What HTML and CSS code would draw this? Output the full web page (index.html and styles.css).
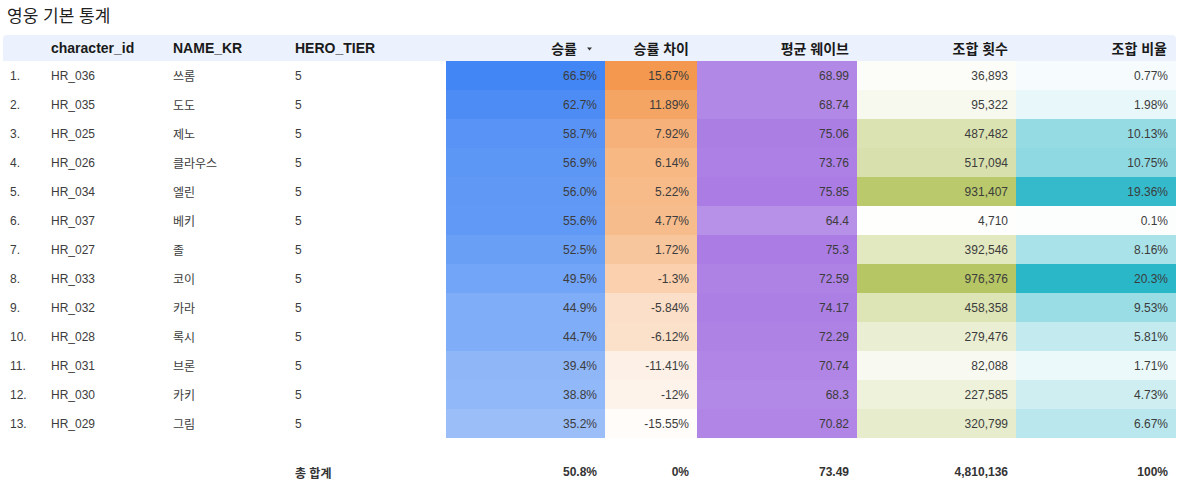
FILE: index.html
```html
<!DOCTYPE html>
<html lang="ko">
<head>
<meta charset="utf-8">
<title>영웅 기본 통계</title>
<link rel="stylesheet" href="styles.css">
</head>
<body>
<div class="title">영웅 기본 통계</div>
<table class="grid">
  <colgroup>
    <col class="c-rank"><col class="c-id"><col class="c-name"><col class="c-tier">
    <col class="c-rate"><col class="c-diff"><col class="c-wave"><col class="c-cnt"><col class="c-ratio">
  </colgroup>
  <thead>
    <tr>
      <th class="first"></th>
      <th>character_id</th>
      <th>NAME_KR</th>
      <th>HERO_TIER</th>
      <th class="num">승률<span class="sort"><svg width="10" height="10" viewBox="0 0 10 10"><polygon points="0,3.5 5,3.5 2.5,6.5" fill="#333"/></svg></span></th>
      <th class="num">승률 차이</th>
      <th class="num">평균 웨이브</th>
      <th class="num">조합 횟수</th>
      <th class="num last">조합 비율</th>
    </tr>
  </thead>
  <tbody>
    <tr><td class="rank">1.</td><td>HR_036</td><td>쓰롬</td><td>5</td><td class="num blue" style="--t:1">66.5%</td><td class="num orange" style="--t:1">15.67%</td><td class="num purple" style="--t:.910">68.99</td><td class="num olive" style="--t:.045">36,893</td><td class="num teal" style="--t:.045">0.77%</td></tr>
    <tr><td class="rank">2.</td><td>HR_035</td><td>도도</td><td>5</td><td class="num blue" style="--t:.943">62.7%</td><td class="num orange" style="--t:.879">11.89%</td><td class="num purple" style="--t:.906">68.74</td><td class="num olive" style="--t:.105">95,322</td><td class="num teal" style="--t:.105">1.98%</td></tr>
    <tr><td class="rank">3.</td><td>HR_025</td><td>제노</td><td>5</td><td class="num blue" style="--t:.883">58.7%</td><td class="num orange" style="--t:.752">7.92%</td><td class="num purple" style="--t:.990">75.06</td><td class="num olive" style="--t:.499">487,482</td><td class="num teal" style="--t:.499">10.13%</td></tr>
    <tr><td class="rank">4.</td><td>HR_026</td><td>클라우스</td><td>5</td><td class="num blue" style="--t:.856">56.9%</td><td class="num orange" style="--t:.695">6.14%</td><td class="num purple" style="--t:.972">73.76</td><td class="num olive" style="--t:.530">517,094</td><td class="num teal" style="--t:.530">10.75%</td></tr>
    <tr><td class="rank">5.</td><td>HR_034</td><td>엘린</td><td>5</td><td class="num blue" style="--t:.842">56.0%</td><td class="num orange" style="--t:.665">5.22%</td><td class="num purple" style="--t:1">75.85</td><td class="num olive" style="--t:.954">931,407</td><td class="num teal" style="--t:.954">19.36%</td></tr>
    <tr><td class="rank">6.</td><td>HR_037</td><td>베키</td><td>5</td><td class="num blue" style="--t:.836">55.6%</td><td class="num orange" style="--t:.651">4.77%</td><td class="num purple" style="--t:.849">64.4</td><td class="num olive" style="--t:.012">4,710</td><td class="num teal" style="--t:.012">0.1%</td></tr>
    <tr><td class="rank">7.</td><td>HR_027</td><td>졸</td><td>5</td><td class="num blue" style="--t:.789">52.5%</td><td class="num orange" style="--t:.553">1.72%</td><td class="num purple" style="--t:.993">75.3</td><td class="num olive" style="--t:.402">392,546</td><td class="num teal" style="--t:.402">8.16%</td></tr>
    <tr><td class="rank">8.</td><td>HR_033</td><td>코이</td><td>5</td><td class="num blue" style="--t:.744">49.5%</td><td class="num orange" style="--t:.456">-1.3%</td><td class="num purple" style="--t:.957">72.59</td><td class="num olive" style="--t:1">976,376</td><td class="num teal" style="--t:1">20.3%</td></tr>
    <tr><td class="rank">9.</td><td>HR_032</td><td>카라</td><td>5</td><td class="num blue" style="--t:.675">44.9%</td><td class="num orange" style="--t:.311">-5.84%</td><td class="num purple" style="--t:.978">74.17</td><td class="num olive" style="--t:.469">458,358</td><td class="num teal" style="--t:.469">9.53%</td></tr>
    <tr><td class="rank">10.</td><td>HR_028</td><td>록시</td><td>5</td><td class="num blue" style="--t:.672">44.7%</td><td class="num orange" style="--t:.302">-6.12%</td><td class="num purple" style="--t:.953">72.29</td><td class="num olive" style="--t:.286">279,476</td><td class="num teal" style="--t:.286">5.81%</td></tr>
    <tr><td class="rank">11.</td><td>HR_031</td><td>브론</td><td>5</td><td class="num blue" style="--t:.592">39.4%</td><td class="num orange" style="--t:.133">-11.41%</td><td class="num purple" style="--t:.933">70.74</td><td class="num olive" style="--t:.09">82,088</td><td class="num teal" style="--t:.09">1.71%</td></tr>
    <tr><td class="rank">12.</td><td>HR_030</td><td>카키</td><td>5</td><td class="num blue" style="--t:.583">38.8%</td><td class="num orange" style="--t:.114">-12%</td><td class="num purple" style="--t:.900">68.3</td><td class="num olive" style="--t:.233">227,585</td><td class="num teal" style="--t:.233">4.73%</td></tr>
    <tr><td class="rank">13.</td><td>HR_029</td><td>그림</td><td>5</td><td class="num blue" style="--t:.529">35.2%</td><td class="num orange" style="--t:.03">-15.55%</td><td class="num purple" style="--t:.934">70.82</td><td class="num olive" style="--t:.329">320,799</td><td class="num teal" style="--t:.329">6.67%</td></tr>
  </tbody>
  <tfoot>
    <tr class="spacer"><td colspan="9"></td></tr>
    <tr class="total"><td></td><td></td><td></td><td>총 합계</td><td class="num">50.8%</td><td class="num">0%</td><td class="num">73.49</td><td class="num">4,810,136</td><td class="num">100%</td></tr>
  </tfoot>
</table>
</body>
</html>
```
FILE: styles.css
```css
html, body {
  margin: 0;
  padding: 0;
  background: #ffffff;
}
body {
  font-family: "Liberation Sans", Arial, "Noto Sans CJK KR", sans-serif;
  color: #3c3c3c;
}
.title {
  height: 35px;
  line-height: 34px;
  padding-left: 7px;
  font-size: 17px;
  color: #222222;
  font-family: "Liberation Sans", Arial, "Noto Sans CJK KR", sans-serif;
}
.grid {
  margin-left: 3px;
  width: 1173px;
  table-layout: fixed;
  border-collapse: collapse;
  border-spacing: 0;
  font-size: 12px;
}
.c-rank { width: 40px; }
.c-id { width: 122px; }
.c-name { width: 122px; }
.c-tier { width: 159px; }
.c-rate { width: 159px; }
.c-diff { width: 92px; }
.c-wave { width: 160px; }
.c-cnt { width: 159px; }
.c-ratio { width: 160px; }

.grid th {
  height: 26px;
  padding: 0 8px;
  background: #ecf2fd;
  font-size: 14px;
  font-weight: bold;
  color: #1a1a1a;
  text-align: left;
  white-space: nowrap;
}
.grid th.first { border-top-left-radius: 4px; }
.grid th.last { border-top-right-radius: 4px; padding-right: 9px; }
.grid th.num { text-align: right; }
.sort {
  display: inline-block;
  width: 10px;
  height: 10px;
  margin-left: 10px;
  vertical-align: 0;
}
.sort svg { display: block; }

.grid td {
  height: 29px;
  padding: 0 8px;
  white-space: nowrap;
  overflow: hidden;
  color: #3c3c3c;
}
.grid td.rank { padding-left: 7px; }
.grid td.num { text-align: right; }

.blue { background-color: rgb(66 133 244 / var(--t)); }
.orange { background-color: rgb(243 152 78 / var(--t)); }
.purple { background-color: rgb(170 124 228 / var(--t)); }
.olive { background-color: rgb(182 198 100 / var(--t)); }
.teal { background-color: rgb(42 183 200 / var(--t)); }

.grid tr.spacer td { height: 20px; padding: 0; }
.grid tr.total td {
  height: 28px;
  font-weight: bold;
  color: #333333;
}
```
